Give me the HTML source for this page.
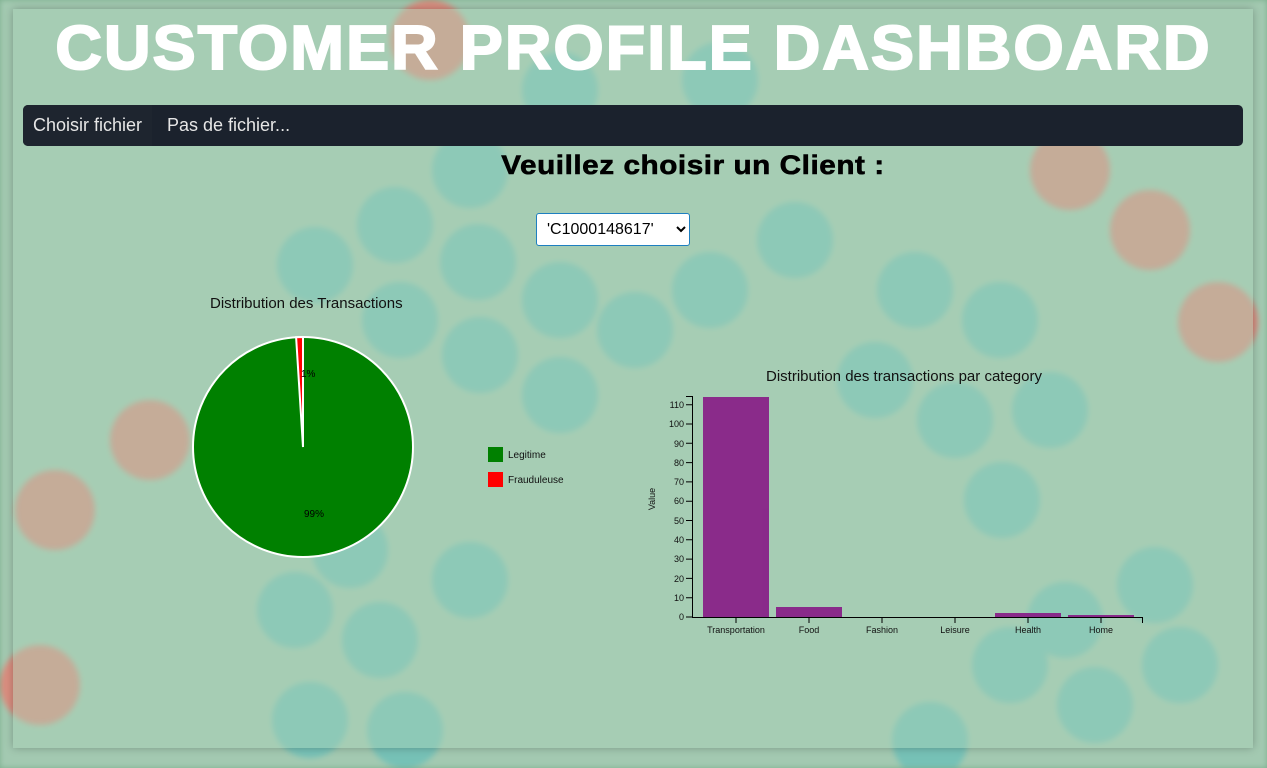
<!DOCTYPE html>
<html><head><meta charset="utf-8"><style>
*{margin:0;padding:0;box-sizing:border-box}
body{width:1267px;height:768px;overflow:hidden;background:#7db08e;font-family:"Liberation Sans",sans-serif;position:relative}
#bg{position:absolute;left:0;top:0;width:1267px;height:768px;filter:blur(3px)}
#panel{position:absolute;left:13px;top:9px;width:1240px;height:739px;background:rgba(170,210,185,0.45);box-shadow:0 0 8px rgba(0,0,0,.25)}
h1{position:absolute;left:0;width:1267px;top:13px;text-align:center;color:#fff;font-size:62px;font-weight:900;letter-spacing:2px;font-family:"Liberation Sans",sans-serif;transform:scaleX(1.04);-webkit-text-stroke:2px #fff}
#file{position:absolute;left:23px;top:105px;width:1220px;height:41px;background:#1b222d;border-radius:5px;color:#e6e6e6;font-size:18px}
#file .b{position:absolute;left:0;top:0;height:41px;width:129px;background:#1e252f;border-radius:5px 0 0 5px;padding:10px 0 0 10px}
#file .t{position:absolute;left:144px;top:10px}
h2{position:absolute;left:0;width:1386px;top:150px;text-align:center;font-size:27px;font-weight:bold;color:#000;letter-spacing:0.5px;-webkit-text-stroke:0.6px #000;transform:scaleX(1.1);transform-origin:693px 0}
select{position:absolute;left:536px;top:213px;width:154px;height:33px;border:1px solid #1e7fc0;border-radius:3px;background:#fff;font-size:16px;padding-left:6px;font-family:"Liberation Sans",sans-serif}
.t1{position:absolute;font-size:15px;color:#111}
</style></head><body>
<svg id="bg" width="1267" height="768">
<rect width="1267" height="768" fill="#a3c9b1"/>
<g fill="#6fc0b8" opacity="0.85">
<circle cx="395" cy="225" r="38"/><circle cx="470" cy="170" r="38"/><circle cx="478" cy="262" r="38"/><circle cx="560" cy="300" r="38"/><circle cx="635" cy="330" r="38"/><circle cx="710" cy="290" r="38"/><circle cx="795" cy="240" r="38"/><circle cx="560" cy="395" r="38"/><circle cx="480" cy="355" r="38"/><circle cx="400" cy="320" r="38"/><circle cx="315" cy="265" r="38"/><circle cx="915" cy="290" r="38"/><circle cx="1000" cy="320" r="38"/><circle cx="955" cy="420" r="38"/><circle cx="1050" cy="410" r="38"/><circle cx="1002" cy="500" r="38"/><circle cx="875" cy="380" r="38"/><circle cx="720" cy="80" r="38"/><circle cx="560" cy="90" r="38"/><circle cx="1155" cy="585" r="38"/><circle cx="1180" cy="665" r="38"/><circle cx="1095" cy="705" r="38"/><circle cx="1010" cy="665" r="38"/><circle cx="380" cy="640" r="38"/><circle cx="295" cy="610" r="38"/><circle cx="310" cy="720" r="38"/><circle cx="405" cy="730" r="38"/><circle cx="350" cy="550" r="38"/><circle cx="470" cy="580" r="38"/><circle cx="1065" cy="620" r="38"/><circle cx="930" cy="740" r="38"/>
</g>
<g fill="#e0867a" opacity="0.9">
<circle cx="430" cy="40" r="40"/><circle cx="150" cy="440" r="40"/><circle cx="55" cy="510" r="40"/><circle cx="40" cy="685" r="40"/><circle cx="1070" cy="170" r="40"/><circle cx="1150" cy="230" r="40"/><circle cx="1218" cy="322" r="40"/>
</g>
</svg>
<div id="panel"></div>
<h1>CUSTOMER PROFILE DASHBOARD</h1>
<div id="file"><div class="b">Choisir fichier</div><div class="t">Pas de fichier...</div></div>
<h2>Veuillez choisir un Client :</h2>
<select><option>'C1000148617'</option></select>
<div class="t1" style="left:210px;top:295px">Distribution des Transactions</div>
<div class="t1" style="left:766px;top:368px">Distribution des transactions par category</div>
<svg style="position:absolute;left:0;top:0" width="1267" height="768" font-family="Liberation Sans, sans-serif">
<circle cx="303" cy="447" r="110" fill="#008000" stroke="#fff" stroke-width="2"/>
<path d="M303 447 L296.1 337.2 A110 110 0 0 1 303 337 Z" fill="#f00" stroke="#fff" stroke-width="2"/>
<text x="301" y="377" font-size="10" fill="#000">1%</text>
<text x="304" y="517" font-size="10" fill="#000">99%</text>
<rect x="488" y="447" width="15" height="15" fill="#008000"/>
<rect x="488" y="472" width="15" height="15" fill="#f00"/>
<text x="508" y="458" font-size="10" fill="#111">Legitime</text>
<text x="508" y="483" font-size="10" fill="#111">Frauduleuse</text>
<g fill="#882288" opacity="0.95">
<rect x="703" y="397" width="66" height="220"/>
<rect x="776" y="607" width="66" height="10"/>
<rect x="995" y="613" width="66" height="4"/>
<rect x="1068" y="615" width="66" height="2"/>
</g>
<g stroke="#000" fill="none">
<path d="M686 396.5H692.5V617.5H1142.5V623"/>
<path d="M736 617v6M809 617v6M882 617v6M955 617v6M1028 617v6M1101 617v6"/>
<path d="M686 617h6M686 597.7h6M686 578.4h6M686 559.1h6M686 539.8h6M686 520.5h6M686 501.2h6M686 481.9h6M686 462.6h6M686 443.3h6M686 424h6M686 404.7h6"/>
</g>
<g font-size="9" fill="#111" text-anchor="end">
<text x="684" y="620">0</text><text x="684" y="601">10</text><text x="684" y="582">20</text><text x="684" y="562">30</text><text x="684" y="543">40</text><text x="684" y="524">50</text><text x="684" y="504">60</text><text x="684" y="485">70</text><text x="684" y="466">80</text><text x="684" y="447">90</text><text x="684" y="427">100</text><text x="684" y="408">110</text>
</g>
<g font-size="9" fill="#111" text-anchor="middle">
<text x="736" y="633">Transportation</text><text x="809" y="633">Food</text><text x="882" y="633">Fashion</text><text x="955" y="633">Leisure</text><text x="1028" y="633">Health</text><text x="1101" y="633">Home</text>
</g>
<text transform="translate(655,499) rotate(-90)" font-size="9" text-anchor="middle" fill="#111">Value</text>
</svg>
</body></html>
